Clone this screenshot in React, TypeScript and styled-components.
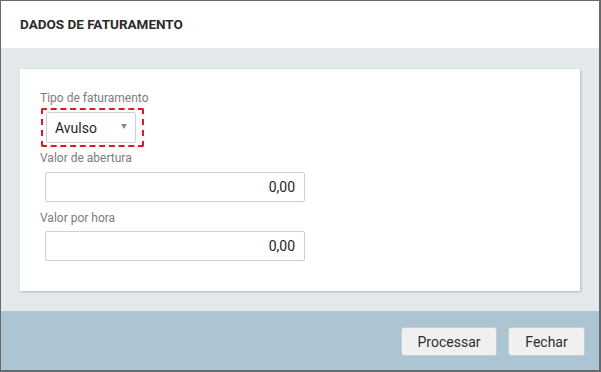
import React from "react";
import styled, { createGlobalStyle } from "styled-components";

const GlobalStyle = createGlobalStyle`
  html, body {
    margin: 0;
    padding: 0;
    background: #ffffff;
  }
  * {
    box-sizing: border-box;
  }
`;

const Dialog = styled.div`
  width: 601px;
  height: 372px;
  display: flex;
  flex-direction: column;
  border-style: solid;
  border-color: #666a6d;
  border-width: 1px 2px 2px 1px;
  font-family: Roboto, "Liberation Sans", sans-serif;
  background: #ffffff;
`;

const Header = styled.div`
  height: 47px;
  flex: none;
  display: flex;
  align-items: center;
  padding: 0 19px 2px;
  background: #ffffff;
`;

const Title = styled.h1`
  margin: 0;
  font-size: 13.5px;
  font-weight: 700;
  color: #2b2b2b;
`;

const Body = styled.div`
  flex: 1;
  background: #e3e8eb;
  padding: 21px 19px 20px 19px;
`;

const Card = styled.div`
  background: #ffffff;
  height: 222px;
  box-shadow: 1px 1px 2px rgba(0, 0, 0, 0.22);
  padding: 21px 20px;
  display: flex;
  flex-direction: column;
`;

const Label = styled.label<{ $gap?: number }>`
  font-size: 12px;
  color: #7c7c7c;
  line-height: 16px;
  margin-bottom: ${({ $gap }) => $gap ?? 0}px;
`;

const Highlight = styled.div`
  align-self: flex-start;
  margin: 2px 0 3px 1px;
  padding: 2px 6px 2px 3px;
  border: 2px dashed #e0162b;
  border-radius: 2px;
`;

const Select = styled.div`
  width: 90px;
  height: 31px;
  display: flex;
  align-items: center;
  justify-content: space-between;
  padding: 0 8px 0 8px;
  border: 1px solid #cfcfcf;
  border-radius: 2px;
  font-size: 14px;
  color: #1f1f1f;
`;

const Arrow = styled.span`
  width: 0;
  height: 0;
  border-left: 3.5px solid transparent;
  border-right: 3.5px solid transparent;
  border-top: 5px solid #8a8a8a;
  margin-top: -2px;
`;

const Input = styled.div<{ $gap?: number }>`
  width: 260px;
  height: 30px;
  margin-left: 5px;
  display: flex;
  align-items: center;
  justify-content: flex-end;
  padding: 0 9px;
  border: 1px solid #cfcfcf;
  border-radius: 2px;
  font-size: 14px;
  color: #1f1f1f;
  margin-bottom: ${({ $gap }) => $gap ?? 0}px;
`;

const Footer = styled.div`
  height: 59px;
  flex: none;
  background: #adc5d2;
  display: flex;
  align-items: center;
  justify-content: flex-end;
  gap: 11px;
  padding: 2px 14px 0 0;
`;

const Button = styled.button<{ $width: number }>`
  width: ${({ $width }) => $width}px;
  height: 29px;
  border: 1px solid #c3cdd3;
  border-radius: 3px;
  background: #f0f0f0;
  font-family: Roboto, "Liberation Sans", sans-serif;
  font-size: 14px;
  color: #2e2e2e;
  padding: 0;
`;

export default function App() {
  return (
    <>
      <GlobalStyle />
      <Dialog>
        <Header>
          <Title>DADOS DE FATURAMENTO</Title>
        </Header>
        <Body>
          <Card>
            <Label>Tipo de faturamento</Label>
            <Highlight>
              <Select>
                <span>Avulso</span>
                <Arrow />
              </Select>
            </Highlight>
            <Label $gap={6}>Valor de abertura</Label>
            <Input $gap={8}>0,00</Input>
            <Label $gap={5}>Valor por hora</Label>
            <Input>0,00</Input>
          </Card>
        </Body>
        <Footer>
          <Button $width={96}>Processar</Button>
          <Button $width={77}>Fechar</Button>
        </Footer>
      </Dialog>
    </>
  );
}
